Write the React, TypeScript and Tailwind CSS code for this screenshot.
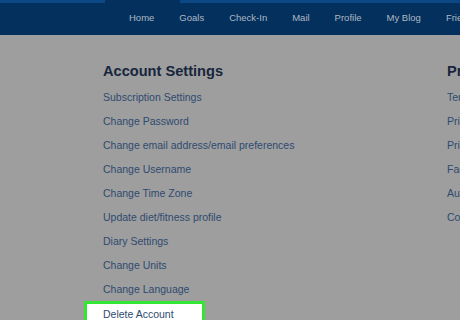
const NAV_ITEMS = ["Home", "Goals", "Check-In", "Mail", "Profile", "My Blog", "Friends"];

const ACCOUNT_LINKS = [
  "Subscription Settings",
  "Change Password",
  "Change email address/email preferences",
  "Change Username",
  "Change Time Zone",
  "Update diet/fitness profile",
  "Diary Settings",
  "Change Units",
  "Change Language",
];

const PRIVACY_LINKS = [
  "Terms of Use",
  "Privacy Policy",
  "Privacy Settings",
  "Facebook Settings",
  "Automatic Sharing",
  "Communication Preferences",
];

export default function App() {
  return (
    <div className="w-[460px] h-[320px] overflow-hidden bg-[#9e9e9e] font-['Liberation_Sans',Arial,sans-serif]">
      {/* Top nav */}
      <div className="h-[35px] bg-[#03305c] flex flex-col">
        <div className="h-[3px] flex">
          <div className="w-[105px] bg-[#0c4883]" />
          <div className="w-[75px]" />
          <div className="flex-1 bg-[#0c4883]" />
        </div>
        <nav className="flex gap-[25px] pl-[129px] pt-[9px] whitespace-nowrap">
          {NAV_ITEMS.map((item) => (
            <span key={item} className="text-[9.5px] leading-[12px] text-[#aeb8c6]">
              {item}
            </span>
          ))}
        </nav>
      </div>

      {/* Settings columns */}
      <div className="flex pl-[103px] pt-[27px] whitespace-nowrap">
        <div className="w-[344px] shrink-0">
          <h2 className="text-[14.6px] leading-[18px] font-bold text-[#17263c]">
            Account Settings
          </h2>
          <ul className="mt-[5px]">
            {ACCOUNT_LINKS.map((link) => (
              <li key={link} className="text-[10.5px] leading-[24px] text-[#2e4a70]">
                {link}
              </li>
            ))}
            <li className="-ml-[19px] w-[121px] border-[3px] border-[#33e633] bg-white pl-[16px] text-[10.5px] leading-[20px] text-[#2e4a70]">
              Delete Account
            </li>
          </ul>
        </div>
        <div className="shrink-0">
          <h2 className="text-[14.6px] leading-[18px] font-bold text-[#17263c]">
            Privacy &amp; Sharing
          </h2>
          <ul className="mt-[5px]">
            {PRIVACY_LINKS.map((link) => (
              <li key={link} className="text-[10.5px] leading-[24px] text-[#2e4a70]">
                {link}
              </li>
            ))}
          </ul>
        </div>
      </div>
    </div>
  );
}
